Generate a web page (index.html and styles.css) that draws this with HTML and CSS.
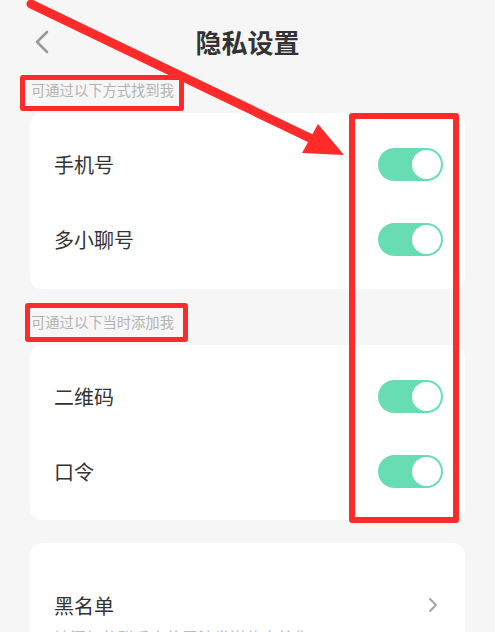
FILE: index.html
```html
<!DOCTYPE html>
<html lang="zh-CN">
<head>
    <meta charset="UTF-8">
    <meta name="viewport" content="width=device-width, initial-scale=1.0">
    <title>隐私设置</title>
    <link rel="stylesheet" href="styles.css">
</head>
<body>
    <div class="page">
        <div class="header">
            <span class="back">
                <svg width="16" height="24" viewBox="0 0 16 24"><polyline points="13,2 3,12 13,22" fill="none" stroke="#9a9a9a" stroke-width="2.6" stroke-linecap="round" stroke-linejoin="round"/></svg>
            </span>
            <h1 class="title">隐私设置</h1>
            <span></span>
        </div>

        <div class="label">可通过以下方式找到我</div>
        <div class="card">
            <div class="row">
                <span class="row-name">手机号</span>
                <span class="switch on"><span class="knob"></span></span>
            </div>
            <div class="row">
                <span class="row-name">多小聊号</span>
                <span class="switch on"><span class="knob"></span></span>
            </div>
        </div>

        <div class="label label-second">可通过以下当时添加我</div>
        <div class="card card-second">
            <div class="row">
                <span class="row-name">二维码</span>
                <span class="switch on"><span class="knob"></span></span>
            </div>
            <div class="row">
                <span class="row-name">口令</span>
                <span class="switch on"><span class="knob"></span></span>
            </div>
        </div>

        <div class="card card-block">
            <div class="block-row">
                <span class="row-name">黑名单</span>
                <svg class="chevron" width="10" height="16" viewBox="0 0 10 16"><polyline points="2,2 8,8 2,14" fill="none" stroke="#a8a8a8" stroke-width="2.2" stroke-linecap="round" stroke-linejoin="round"/></svg>
            </div>
            <div class="block-note">被添加的联系人将无法发送信息给你</div>
        </div>
    </div>

    <!-- red annotations drawn over the screenshot -->
    <div class="mark mark-label-one"></div>
    <div class="mark mark-label-two"></div>
    <div class="mark mark-switches"></div>
    <svg class="arrow" width="495" height="632" viewBox="0 0 495 632">
        <line x1="31" y1="4" x2="312" y2="139" stroke="#ff2b2b" stroke-width="9" stroke-linecap="round"/>
        <polygon points="302,153 318,124 344,155" fill="#ff2b2b"/>
    </svg>
</body>
</html>
```

FILE: styles.css
```css
body {
    margin: 0;
    background: #f6f6f6;
    font-family: "Noto Sans CJK SC", "Noto Sans", sans-serif;
    color: #333;
    overflow: hidden;
}
.page {
    width: 495px;
    height: 632px;
    overflow: hidden;
}
.header {
    display: grid;
    grid-template-columns: 60px 1fr 60px;
    align-items: center;
    padding: 28px 0 24px;
}
.back {
    display: flex;
    padding-left: 34px;
    height: 28px;
    align-items: center;
}
.title {
    margin: 0;
    text-align: center;
    font-size: 26px;
    line-height: 28px;
    font-weight: 700;
    color: #333;
}
.label {
    margin: 0 0 13px 31px;
    font-size: 14.3px;
    line-height: 20px;
    color: #b3b3b3;
}
.label-second {
    margin-top: 23px;
}
.card {
    margin: 0 30px;
    background: #fff;
    border-radius: 12px;
    padding: 14px 0 12px;
}
.card-second {
    padding-bottom: 11px;
}
.row {
    height: 75px;
    display: flex;
    align-items: center;
    justify-content: space-between;
    padding: 0 22px 0 24px;
}
.row-name {
    font-size: 20px;
    color: #333;
}
.switch {
    width: 65px;
    height: 33px;
    border-radius: 17px;
    background: #e0e0e0;
    display: flex;
    align-items: center;
    padding: 0 2px;
    box-sizing: border-box;
}
.switch.on {
    background: #68ddb3;
    justify-content: flex-end;
}
.knob {
    width: 29px;
    height: 29px;
    border-radius: 50%;
    background: #fff;
}
.card-block {
    margin-top: 23px;
    padding: 48px 0 20px;
}
.block-row {
    display: flex;
    align-items: center;
    justify-content: space-between;
    height: 28px;
    padding: 0 27px 0 24px;
}
.block-note {
    margin: 6px 24px 0;
    font-size: 16px;
    color: #bbb;
}
.mark {
    position: absolute;
    border: 5px solid #ff2b2b;
    border-radius: 3px;
    box-sizing: border-box;
}
.mark-label-one {
    left: 20px;
    top: 75px;
    width: 164px;
    height: 36px;
}
.mark-label-two {
    left: 25px;
    top: 303px;
    width: 163px;
    height: 39px;
}
.mark-switches {
    left: 349px;
    top: 113px;
    width: 110px;
    height: 410px;
    border-width: 6px;
}
.arrow {
    position: absolute;
    left: 0;
    top: 0;
}
```
